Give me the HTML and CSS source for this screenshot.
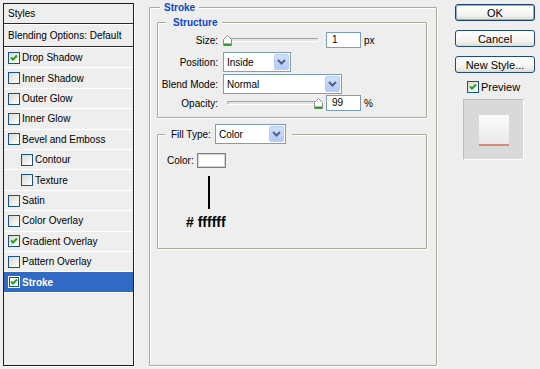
FILE: index.html
```html
<!DOCTYPE html>
<html>
<head>
<meta charset="utf-8">
<link rel="stylesheet" href="styles.css">
</head>
<body>
<div class="dialog">
  <div class="styles-panel">
    <div class="panel-head">Styles</div>
    <div class="panel-blend">Blending Options: Default</div>
    <ul class="fx-list">
      <li class="fx"><span class="cb"><svg viewBox="0 0 10 10" width="10" height="10"><path d="M2 4.5 L4 6.5 L8 2.5" fill="none" stroke="#21a121" stroke-width="2"/></svg></span>Drop Shadow</li>
      <li class="fx"><span class="cb"></span>Inner Shadow</li>
      <li class="fx"><span class="cb"></span>Outer Glow</li>
      <li class="fx"><span class="cb"></span>Inner Glow</li>
      <li class="fx"><span class="cb"></span>Bevel and Emboss</li>
      <li class="fx sub"><span class="cb"></span>Contour</li>
      <li class="fx sub"><span class="cb"></span>Texture</li>
      <li class="fx"><span class="cb"></span>Satin</li>
      <li class="fx"><span class="cb"></span>Color Overlay</li>
      <li class="fx"><span class="cb"><svg viewBox="0 0 10 10" width="10" height="10"><path d="M2 4.5 L4 6.5 L8 2.5" fill="none" stroke="#21a121" stroke-width="2"/></svg></span>Gradient Overlay</li>
      <li class="fx"><span class="cb"></span>Pattern Overlay</li>
      <li class="fx selected"><span class="cb"><svg viewBox="0 0 10 10" width="10" height="10"><path d="M2 4.5 L4 6.5 L8 2.5" fill="none" stroke="#21a121" stroke-width="2"/></svg></span>Stroke</li>
    </ul>
  </div>

  <fieldset class="group stroke-group">
    <legend class="title title-stroke">Stroke</legend>

    <fieldset class="group structure">
      <legend class="title title-structure">Structure</legend>
      <div class="form">
        <label class="lbl">Size:</label>
        <div class="ctl">
          <div class="slider">
            <div class="track"></div>
            <span class="thumb" style="left:0px"><svg width="9" height="11" viewBox="0 0 9 11"><path d="M0.5 10.5 V4.5 L4.5 0.5 L8.5 4.5 V10.5 Z" fill="#fff" stroke="#8c8c88"/><path d="M1 9.5 H8" stroke="#21a121" stroke-width="2"/></svg></span>
          </div>
          <div class="num">1</div>
          <span class="unit">px</span>
        </div>

        <label class="lbl">Position:</label>
        <div class="ctl">
          <div class="combo combo-pos"><span class="val">Inside</span><span class="drop"><svg width="9" height="6" viewBox="0 0 9 6"><path d="M1 1 L4.5 4.5 L8 1" fill="none" stroke="#4d6185" stroke-width="2"/></svg></span></div>
        </div>

        <label class="lbl">Blend Mode:</label>
        <div class="ctl">
          <div class="combo combo-blend"><span class="val">Normal</span><span class="drop"><svg width="9" height="6" viewBox="0 0 9 6"><path d="M1 1 L4.5 4.5 L8 1" fill="none" stroke="#4d6185" stroke-width="2"/></svg></span></div>
        </div>

        <label class="lbl">Opacity:</label>
        <div class="ctl">
          <div class="slider">
            <div class="track"></div>
            <span class="thumb" style="left:90.6px"><svg width="9" height="11" viewBox="0 0 9 11"><path d="M0.5 10.5 V4.5 L4.5 0.5 L8.5 4.5 V10.5 Z" fill="#fff" stroke="#8c8c88"/><path d="M1 9.5 H8" stroke="#21a121" stroke-width="2"/></svg></span>
          </div>
          <div class="num">99</div>
          <span class="unit">%</span>
        </div>
      </div>
    </fieldset>

    <fieldset class="group fill">
      <legend class="fill-legend">
        <span class="fill-row">
          <span class="fill-label">Fill Type:</span>
          <span class="combo combo-fill"><span class="val">Color</span><span class="drop"><svg width="9" height="6" viewBox="0 0 9 6"><path d="M1 1 L4.5 4.5 L8 1" fill="none" stroke="#4d6185" stroke-width="2"/></svg></span></span>
        </span>
      </legend>
      <div class="color-row">
        <span class="color-label">Color:</span>
        <span class="swatch"></span>
      </div>
      <div class="pointer"></div>
      <div class="hex"># ffffff</div>
    </fieldset>
  </fieldset>

  <div class="actions">
    <button class="btn btn-default">OK</button>
    <button class="btn">Cancel</button>
    <button class="btn">New Style...</button>
    <div class="preview-check"><span class="cb"><svg viewBox="0 0 10 10" width="10" height="10"><path d="M2 4.5 L4 6.5 L8 2.5" fill="none" stroke="#21a121" stroke-width="2"/></svg></span>Preview</div>
    <div class="preview-box"><div class="preview-swatch"></div></div>
  </div>
</div>
</body>
</html>
```

FILE: styles.css
```css
* { box-sizing: border-box; }
html, body { margin: 0; padding: 0; }
body {
  width: 540px;
  height: 369px;
  overflow: hidden;
  background: #eeeeee;
  font-family: "Liberation Sans", Arial, sans-serif;
  font-size: 10px;
  color: #000;
}
.dialog { display: flex; align-items: flex-start; }

/* left styles list */
.styles-panel {
  margin: 3px 0 0 3px;
  width: 131px;
  height: 363px;
  border: 1px solid #1e1e1e;
  background: #eeeeee;
  box-shadow: 1px 1px 0 #ffffff;
}
.panel-head {
  height: 20px;
  line-height: 19px;
  padding-left: 4px;
  border-bottom: 1px solid #2a2a2a;
}
.panel-blend {
  height: 23px;
  line-height: 21px;
  padding-left: 4px;
  border-top: 1px solid #ffffff;
  border-bottom: 1px solid #2a2a2a;
}
.fx-list { list-style: none; margin: 0; padding: 0; border-top: 1px solid #fff; }
.fx {
  height: 20.41px;
  display: flex;
  align-items: center;
  padding-left: 4px;
  border-bottom: 1px solid #ffffff;
}
.fx.sub { padding-left: 17px; }
.fx.selected { background: #316ac5; color: #fff; font-weight: bold; }
.cb {
  width: 12px;
  height: 12px;
  flex: none;
  margin-right: 2px;
  border: 1px solid #1c5180;
  background: linear-gradient(135deg, #d8d8d2 0%, #eeeeea 55%, #ffffff 100%);
  display: flex;
  align-items: center;
  justify-content: center;
}
.fx.selected .cb { background: #fff; border-color: #fff; box-shadow: inset 0 0 0 1px #1c5180; }

/* group boxes */
.group {
  margin: 0;
  padding: 0;
  min-width: 0;
  border: 1px solid #a9a89a;
  border-radius: 1px;
  box-shadow: inset 1px 1px 0 #ffffff, 1px 1px 0 #ffffff;
}
.title {
  background: #eeeeee;
  color: #0b45d2;
  font-weight: bold;
  line-height: 13px;
}
.stroke-group {
  margin: 1px 0 0 15px;
  width: 288px;
  height: 365px;
}
.title-stroke { margin-left: 10px; padding: 0 4px; }
.structure {
  margin: 2px 0 0 7px;
  width: 270px;
  height: 102px;
}
.title-structure { margin-left: 8px; padding: 0 5px 0 7px; }

.form {
  display: grid;
  grid-template-columns: 60px auto;
  grid-template-rows: 22px 22px 22px 16px;
  column-gap: 5px;
  align-items: center;
}
.lbl { text-align: right; }
.ctl { display: flex; align-items: center; height: 100%; }
.slider {
  position: relative;
  width: 100px;
  height: 100%;
  display: flex;
  align-items: center;
}
.track {
  flex: 1;
  margin: 0 4px;
  height: 4px;
  border-radius: 2px;
  background: #e4e3dd;
  border: 1px solid;
  border-color: #a3a29c #ffffff #ffffff #a3a29c;
}
.thumb {
  position: absolute;
  top: 50%;
  margin-top: -5px;
  width: 9px;
  height: 11px;
  display: block;
}
.thumb svg { display: block; }
.num {
  margin-left: 3px;
  width: 35px;
  height: 16px;
  border: 1px solid #7f9db9;
  background: #fff;
  padding-left: 5px;
  line-height: 14px;
}
.unit { margin-left: 3px; }

.combo {
  display: flex;
  align-items: stretch;
  height: 20px;
  border: 1px solid #7f9db9;
  background: #fff;
}
.combo .val { flex: 1; padding-left: 3px; display: flex; align-items: center; }
.combo .drop {
  width: 15px;
  margin: 1px;
  border-radius: 2px;
  border: 1px solid #b9cdf6;
  background: linear-gradient(#d3e1fd, #b4c9f6);
  display: flex;
  align-items: center;
  justify-content: center;
}
.combo-pos { width: 68px; }
.combo-blend { width: 119px; }

.fill {
  margin: 6px 0 0 7px;
  width: 270px;
  height: 125px;
}
.fill-legend { margin-left: 7px; padding: 0 6px; background: #eeeeee; }
.fill-row { display: flex; align-items: center; }
.fill-label { width: 44px; }
.combo-fill { width: 71px; }

.color-row {
  margin: 9px 0 0 9px;
  display: flex;
  align-items: center;
  height: 15px;
}
.color-label { width: 30px; }
.swatch {
  width: 29px;
  height: 15px;
  background: #fff;
  border: 1px solid #7f7f7f;
  box-shadow: inset 0 0 0 1px #d4d4d4;
}
.pointer {
  margin: 8px 0 0 50px;
  width: 2px;
  height: 33px;
  background: #000;
}
.hex {
  margin: 5px 0 0 28px;
  font-size: 14px;
  font-weight: bold;
  line-height: 16px;
}

/* right column */
.actions {
  margin: 4px 0 0 18px;
  width: 80px;
  display: flex;
  flex-direction: column;
}
.btn {
  width: 80px;
  height: 17px;
  margin: 0 0 9px 0;
  padding: 0;
  border: 1px solid #234a7a;
  border-radius: 3px;
  background: linear-gradient(#ffffff, #f2f2ee 70%, #dcdad2);
  font-family: "Liberation Sans", Arial, sans-serif;
  font-size: 11px;
  color: #000;
}
.btn-default { box-shadow: inset 0 0 0 1px #8fb0e0; border-color: #1c3f6e; }
.preview-check {
  margin: -2px 0 0 12px;
  height: 14px;
  display: flex;
  align-items: center;
  font-size: 11px;
}
.preview-box {
  margin: 5px 0 0 8px;
  width: 61px;
  height: 61px;
  background: #d9d9d9;
  border: 1px solid;
  border-color: #bcbcb2 #ffffff #ffffff #bcbcb2;
  padding: 15px 0 0 15px;
}
.preview-swatch {
  width: 30px;
  height: 31px;
  background: linear-gradient(#fbfbfb, #e9e9e9);
  border-bottom: 2px solid #d48a74;
}
```
